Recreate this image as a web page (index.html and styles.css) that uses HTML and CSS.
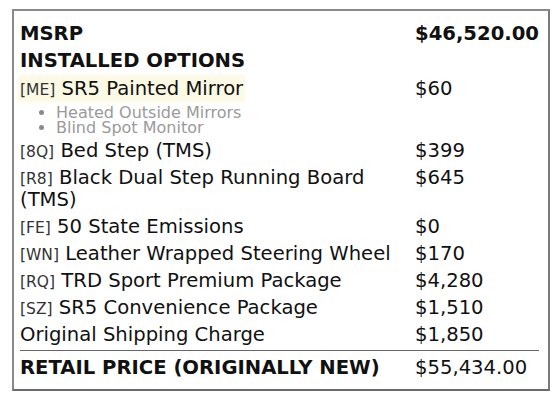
FILE: index.html
```html
<!DOCTYPE html>
<html>
<head>
<meta charset="utf-8">
<link rel="stylesheet" href="styles.css">
</head>
<body>
<div class="sticker">
  <table class="price-table">
    <tr class="row-strong">
      <td class="label">MSRP</td>
      <td class="price">$46,520.00</td>
    </tr>
    <tr class="row-strong">
      <td class="label" colspan="2">INSTALLED OPTIONS</td>
    </tr>
    <tr class="row-featured">
      <td class="label">
        <span class="highlight"><span class="code">[ME]</span> SR5 Painted Mirror</span>
        <ul class="features">
          <li>Heated Outside Mirrors</li>
          <li>Blind Spot Monitor</li>
        </ul>
      </td>
      <td class="price">$60</td>
    </tr>
    <tr>
      <td class="label"><span class="code">[8Q]</span> Bed Step (TMS)</td>
      <td class="price">$399</td>
    </tr>
    <tr>
      <td class="label"><span class="code">[R8]</span> Black Dual Step Running Board (TMS)</td>
      <td class="price">$645</td>
    </tr>
    <tr>
      <td class="label"><span class="code">[FE]</span> 50 State Emissions</td>
      <td class="price">$0</td>
    </tr>
    <tr>
      <td class="label"><span class="code">[WN]</span> Leather Wrapped Steering Wheel</td>
      <td class="price">$170</td>
    </tr>
    <tr>
      <td class="label"><span class="code">[RQ]</span> TRD Sport Premium Package</td>
      <td class="price">$4,280</td>
    </tr>
    <tr>
      <td class="label"><span class="code">[SZ]</span> SR5 Convenience Package</td>
      <td class="price">$1,510</td>
    </tr>
    <tr class="row-last">
      <td class="label">Original Shipping Charge</td>
      <td class="price">$1,850</td>
    </tr>
    <tr class="row-total">
      <td class="label">RETAIL PRICE (ORIGINALLY NEW)</td>
      <td class="price">$55,434.00</td>
    </tr>
  </table>
</div>
</body>
</html>
```

FILE: styles.css
```css
html, body {
  margin: 0;
  padding: 0;
  background: #ffffff;
}

body {
  font-family: "DejaVu Sans", sans-serif;
  color: #111111;
}

.sticker {
  box-sizing: border-box;
  width: 538px;
  height: 382px;
  margin: 9px 0 0 12px;
  border: 2px solid #8a8a8a;
  border-bottom-color: #6a6a6a;
  border-right-color: #7a7a7a;
  padding: 10px 9px 0 6px;
}

.price-table {
  width: 519px;
  border-collapse: collapse;
  font-size: 19.6px;
  line-height: 22px;
}

.price-table td {
  padding: 2px 0 3px;
  vertical-align: top;
}

.label {
  width: 390px;
  padding-right: 7px !important;
}

.price {
  width: 122px;
  white-space: nowrap;
}

.row-strong td {
  font-weight: bold;
}

.row-featured td {
  padding-top: 3px;
}

.highlight {
  background: #fcf9e4;
  box-shadow: 0 0 3px 2px #fcf9e4;
}

.code {
  font-size: 15.5px;
  line-height: 1;
  color: #333333;
}

.features {
  margin: 5px 0 0 0;
  padding: 0 0 0 36px;
  font-size: 16px;
  line-height: 15px;
  color: #9a9a9a;
}

.features li::marker {
  color: #8a8a8a;
}

.row-last td {
  padding-bottom: 4px;
}

.row-total td {
  border-top: 1px solid #666666;
  padding-top: 6px;
  font-weight: normal;
}

.row-total .label {
  font-weight: bold;
}
```
